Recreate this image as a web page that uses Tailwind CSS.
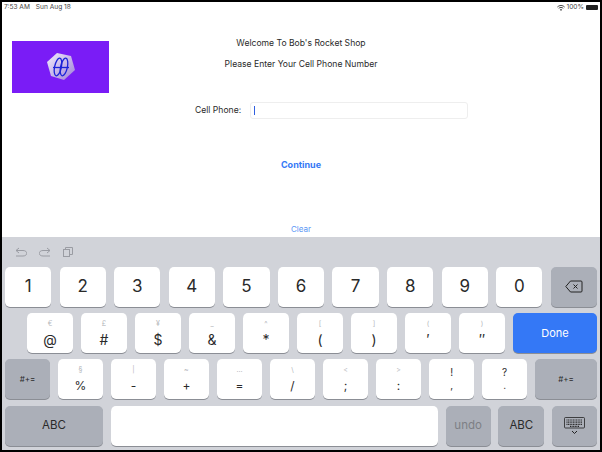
<!DOCTYPE html>
<html lang="en">
<head>
  <meta charset="UTF-8"><meta name="viewport" content="width=device-width,initial-scale=1.0">
  <title>Bob's Rocket Shop</title>
  <script src="https://cdn.jsdelivr.net/npm/@tailwindcss/browser@4"></script>
</head>
<body class="bg-black w-[602px] h-[452px] overflow-hidden p-[2px] font-['Inter','Liberation_Sans',sans-serif] text-[#2a2a2a]">
  <div class="w-[598px] h-[448px] flex flex-col bg-white">

    <!-- status bar -->
    <div class="h-[10px] flex justify-between items-center pl-[2px] pr-[2px] text-[6.6px] mt-[1px] text-[#444]">
      <div class="flex gap-[6px]"><span>7:53 AM</span><span>Sun Aug 18</span></div>
      <div class="flex items-center gap-[2px]">
        <svg width="8" height="6" viewBox="0 0 8 6" fill="none" stroke="#333" stroke-width="0.9"><path d="M0.4 2 C2.4 0 5.6 0 7.6 2 M1.7 3.3 C3 2.2 5 2.2 6.3 3.3"/><path d="M4 6 L2.9 4.6 C3.5 4.1 4.5 4.1 5.1 4.6 Z" fill="#333" stroke="none"/></svg>
        <span>100%</span>
        <span class="w-[12px] h-[5px] bg-[#222] rounded-[1px]"></span>
      </div>
    </div>

    <!-- form -->
    <div class="h-[224px] flex flex-col">
      <div class="grid grid-cols-[1fr_auto_1fr] pt-[27.5px] h-[89px]">
        <div class="pl-[10px]">
          <div class="w-[97px] h-[52px] bg-[#7a1cf6] flex items-center justify-center">
            <svg width="30" height="30" viewBox="0 0 30 30">
              <defs><linearGradient id="hex" x1="0" y1="0" x2="1" y2="1"><stop offset="0" stop-color="#f3eefc"/><stop offset="1" stop-color="#9d7fd8"/></linearGradient></defs>
              <polygon points="11,1 25,4 29,18 18,28 5,24 1,10" fill="url(#hex)"/>
              <g fill="none" stroke="#1a22d8" stroke-width="1.3">
                <ellipse cx="12" cy="15" rx="3.4" ry="9" transform="rotate(12 12 15)"/>
                <ellipse cx="18" cy="15" rx="3.4" ry="9" transform="rotate(12 18 15)"/>
                <path d="M7 15.5 H23"/>
              </g>
            </svg>
          </div>
        </div>
        <div class="flex flex-col items-center text-[8.6px] gap-[10px] leading-[11px] -mt-[3px]">
          <p>Welcome To Bob's Rocket Shop</p>
          <p>Please Enter Your Cell Phone Number</p>
        </div>
        <div></div>
      </div>

      <div class="flex items-center pl-[193px] text-[8.6px] h-[17px]">
        <label class="w-[55px]">Cell Phone:</label>
        <div class="w-[218px] h-[17px] border border-[#eeeeee] rounded-[3px] flex items-center pl-[3px]">
          <span class="w-[1px] h-[9px] bg-[#2f5fe0]"></span>
        </div>
      </div>

      <div class="text-center text-[9px] font-bold text-[#3478f6] mt-[40px] leading-[11px]">Continue</div>
      <div class="text-center text-[8px] text-[#5a96f5] mt-[54px] leading-[10px]">Clear</div>
    </div>

    <!-- keyboard -->
    <div class="flex-1 bg-[#d1d3d9] px-[3px]">
      <div class="h-[29.5px] flex items-center gap-[12px] pl-[10px] text-[#9a9ca3]">
        <svg width="12" height="10" viewBox="0 0 12 10" fill="none" stroke="currentColor"><path d="M4 1 L1 3.5 L4 6 M1 3.5 H8 C13 3.5 13 9 8 9 H1"/></svg>
        <svg width="12" height="10" viewBox="0 0 12 10" fill="none" stroke="currentColor"><path d="M8 1 L11 3.5 L8 6 M11 3.5 H4 C-1 3.5 -1 9 4 9 H11"/></svg>
        <svg width="10" height="10" viewBox="0 0 10 10" fill="none" stroke="currentColor"><rect x="0.5" y="2.5" width="6" height="7"/><path d="M2.5 2 V0.5 H9.5 V7.5 H7"/></svg>
      </div>

      <div class="flex flex-col gap-[6.4px]">
        <!-- digits -->
        <div class="grid grid-cols-11 gap-x-[8.4px] h-[40px] text-[17px]">
          <div class="bg-white rounded-[5px] shadow-[0_1px_0_#8b8e95] flex items-center justify-center">1</div>
          <div class="bg-white rounded-[5px] shadow-[0_1px_0_#8b8e95] flex items-center justify-center">2</div>
          <div class="bg-white rounded-[5px] shadow-[0_1px_0_#8b8e95] flex items-center justify-center">3</div>
          <div class="bg-white rounded-[5px] shadow-[0_1px_0_#8b8e95] flex items-center justify-center">4</div>
          <div class="bg-white rounded-[5px] shadow-[0_1px_0_#8b8e95] flex items-center justify-center">5</div>
          <div class="bg-white rounded-[5px] shadow-[0_1px_0_#8b8e95] flex items-center justify-center">6</div>
          <div class="bg-white rounded-[5px] shadow-[0_1px_0_#8b8e95] flex items-center justify-center">7</div>
          <div class="bg-white rounded-[5px] shadow-[0_1px_0_#8b8e95] flex items-center justify-center">8</div>
          <div class="bg-white rounded-[5px] shadow-[0_1px_0_#8b8e95] flex items-center justify-center">9</div>
          <div class="bg-white rounded-[5px] shadow-[0_1px_0_#8b8e95] flex items-center justify-center">0</div>
          <div class="bg-[#abafb8] rounded-[5px] shadow-[0_1px_0_#8b8e95] flex items-center justify-center">
            <svg width="18" height="13" viewBox="0 0 18 13" fill="none" stroke="#222" stroke-width="1"><path d="M5.5 1 H16 a1 1 0 0 1 1 1 V11 a1 1 0 0 1 -1 1 H5.5 L0.8 6.5 Z"/><path d="M8.5 4.5 L12.5 8.5 M12.5 4.5 L8.5 8.5"/></svg>
          </div>
        </div>

        <!-- symbols -->
        <div class="grid grid-cols-[repeat(9,1fr)_84px] gap-x-[8px] h-[40px] pl-[22px]">
          <div class="bg-white rounded-[5px] shadow-[0_1px_0_#8b8e95] flex flex-col items-center pt-[6px]"><span class="text-[7px] leading-[10px] text-[#b4b6bb]">€</span><span class="text-[14px] leading-[21px]">@</span></div>
          <div class="bg-white rounded-[5px] shadow-[0_1px_0_#8b8e95] flex flex-col items-center pt-[6px]"><span class="text-[7px] leading-[10px] text-[#b4b6bb]">£</span><span class="text-[14px] leading-[21px]">#</span></div>
          <div class="bg-white rounded-[5px] shadow-[0_1px_0_#8b8e95] flex flex-col items-center pt-[6px]"><span class="text-[7px] leading-[10px] text-[#b4b6bb]">¥</span><span class="text-[14px] leading-[21px]">$</span></div>
          <div class="bg-white rounded-[5px] shadow-[0_1px_0_#8b8e95] flex flex-col items-center pt-[6px]"><span class="text-[7px] leading-[10px] text-[#b4b6bb]">_</span><span class="text-[14px] leading-[21px]">&amp;</span></div>
          <div class="bg-white rounded-[5px] shadow-[0_1px_0_#8b8e95] flex flex-col items-center pt-[6px]"><span class="text-[7px] leading-[10px] text-[#b4b6bb]">^</span><span class="text-[14px] leading-[21px]">*</span></div>
          <div class="bg-white rounded-[5px] shadow-[0_1px_0_#8b8e95] flex flex-col items-center pt-[6px]"><span class="text-[7px] leading-[10px] text-[#b4b6bb]">[</span><span class="text-[14px] leading-[21px]">(</span></div>
          <div class="bg-white rounded-[5px] shadow-[0_1px_0_#8b8e95] flex flex-col items-center pt-[6px]"><span class="text-[7px] leading-[10px] text-[#b4b6bb]">]</span><span class="text-[14px] leading-[21px]">)</span></div>
          <div class="bg-white rounded-[5px] shadow-[0_1px_0_#8b8e95] flex flex-col items-center pt-[6px]"><span class="text-[7px] leading-[10px] text-[#b4b6bb]">(</span><span class="text-[14px] leading-[21px]">′</span></div>
          <div class="bg-white rounded-[5px] shadow-[0_1px_0_#8b8e95] flex flex-col items-center pt-[6px]"><span class="text-[7px] leading-[10px] text-[#b4b6bb]">)</span><span class="text-[14px] leading-[21px]">″</span></div>
          <div class="bg-[#3478f6] rounded-[5px] shadow-[0_1px_0_#8b8e95] flex items-center justify-center text-white text-[11px]">Done</div>
        </div>

        <!-- punctuation -->
        <div class="grid grid-cols-[45px_repeat(9,1fr)_62px] gap-x-[7.7px] h-[40px]">
          <div class="bg-[#abafb8] rounded-[5px] shadow-[0_1px_0_#8b8e95] flex items-center justify-center text-[8px]">#+=</div>
          <div class="bg-white rounded-[5px] shadow-[0_1px_0_#8b8e95] flex flex-col items-center pt-[6px]"><span class="text-[7px] leading-[10px] text-[#b4b6bb]">§</span><span class="text-[12px] leading-[21px]">%</span></div>
          <div class="bg-white rounded-[5px] shadow-[0_1px_0_#8b8e95] flex flex-col items-center pt-[6px]"><span class="text-[7px] leading-[10px] text-[#b4b6bb]">|</span><span class="text-[12px] leading-[21px]">-</span></div>
          <div class="bg-white rounded-[5px] shadow-[0_1px_0_#8b8e95] flex flex-col items-center pt-[6px]"><span class="text-[7px] leading-[10px] text-[#b4b6bb]">~</span><span class="text-[12px] leading-[21px]">+</span></div>
          <div class="bg-white rounded-[5px] shadow-[0_1px_0_#8b8e95] flex flex-col items-center pt-[6px]"><span class="text-[7px] leading-[10px] text-[#b4b6bb]">…</span><span class="text-[12px] leading-[21px]">=</span></div>
          <div class="bg-white rounded-[5px] shadow-[0_1px_0_#8b8e95] flex flex-col items-center pt-[6px]"><span class="text-[7px] leading-[10px] text-[#b4b6bb]">\</span><span class="text-[12px] leading-[21px]">/</span></div>
          <div class="bg-white rounded-[5px] shadow-[0_1px_0_#8b8e95] flex flex-col items-center pt-[6px]"><span class="text-[7px] leading-[10px] text-[#b4b6bb]">&lt;</span><span class="text-[12px] leading-[21px]">;</span></div>
          <div class="bg-white rounded-[5px] shadow-[0_1px_0_#8b8e95] flex flex-col items-center pt-[6px]"><span class="text-[7px] leading-[10px] text-[#b4b6bb]">&gt;</span><span class="text-[12px] leading-[21px]">:</span></div>
          <div class="bg-white rounded-[5px] shadow-[0_1px_0_#8b8e95] flex flex-col items-center pt-[7px]"><span class="text-[10px] leading-[13px]">!</span><span class="text-[10px] leading-[13px]">,</span></div>
          <div class="bg-white rounded-[5px] shadow-[0_1px_0_#8b8e95] flex flex-col items-center pt-[7px]"><span class="text-[10px] leading-[13px]">?</span><span class="text-[10px] leading-[13px]">.</span></div>
          <div class="bg-[#abafb8] rounded-[5px] shadow-[0_1px_0_#8b8e95] flex items-center justify-center text-[8px]">#+=</div>
        </div>

        <!-- bottom row -->
        <div class="flex gap-x-[7.7px] h-[40px] text-[11.5px]">
          <div class="w-[98px] bg-[#abafb8] rounded-[5px] shadow-[0_1px_0_#8b8e95] flex items-center justify-center">ABC</div>
          <div class="flex-1 bg-white rounded-[5px] shadow-[0_1px_0_#8b8e95]"></div>
          <div class="w-[45px] bg-[#abafb8] rounded-[5px] shadow-[0_1px_0_#8b8e95] flex items-center justify-center text-[#7d7f85]">undo</div>
          <div class="w-[46px] bg-[#abafb8] rounded-[5px] shadow-[0_1px_0_#8b8e95] flex items-center justify-center">ABC</div>
          <div class="w-[45px] bg-[#abafb8] rounded-[5px] shadow-[0_1px_0_#8b8e95] flex items-center justify-center">
            <svg width="21" height="18" viewBox="0 0 21 18" fill="none" stroke="#222" stroke-width="0.8"><rect x="0.5" y="0.5" width="20" height="10.5" rx="1"/><path d="M2.5 3 H18.5 M2.5 5.2 H18.5 M2.5 7.4 H18.5 M6 9.4 H15" stroke-width="1.2" stroke-dasharray="1 0.6"/><path d="M8 14 L10.5 16.5 L13 14" stroke-width="1"/></svg>
          </div>
        </div>
      </div>
    </div>
  </div>
</body>
</html>
